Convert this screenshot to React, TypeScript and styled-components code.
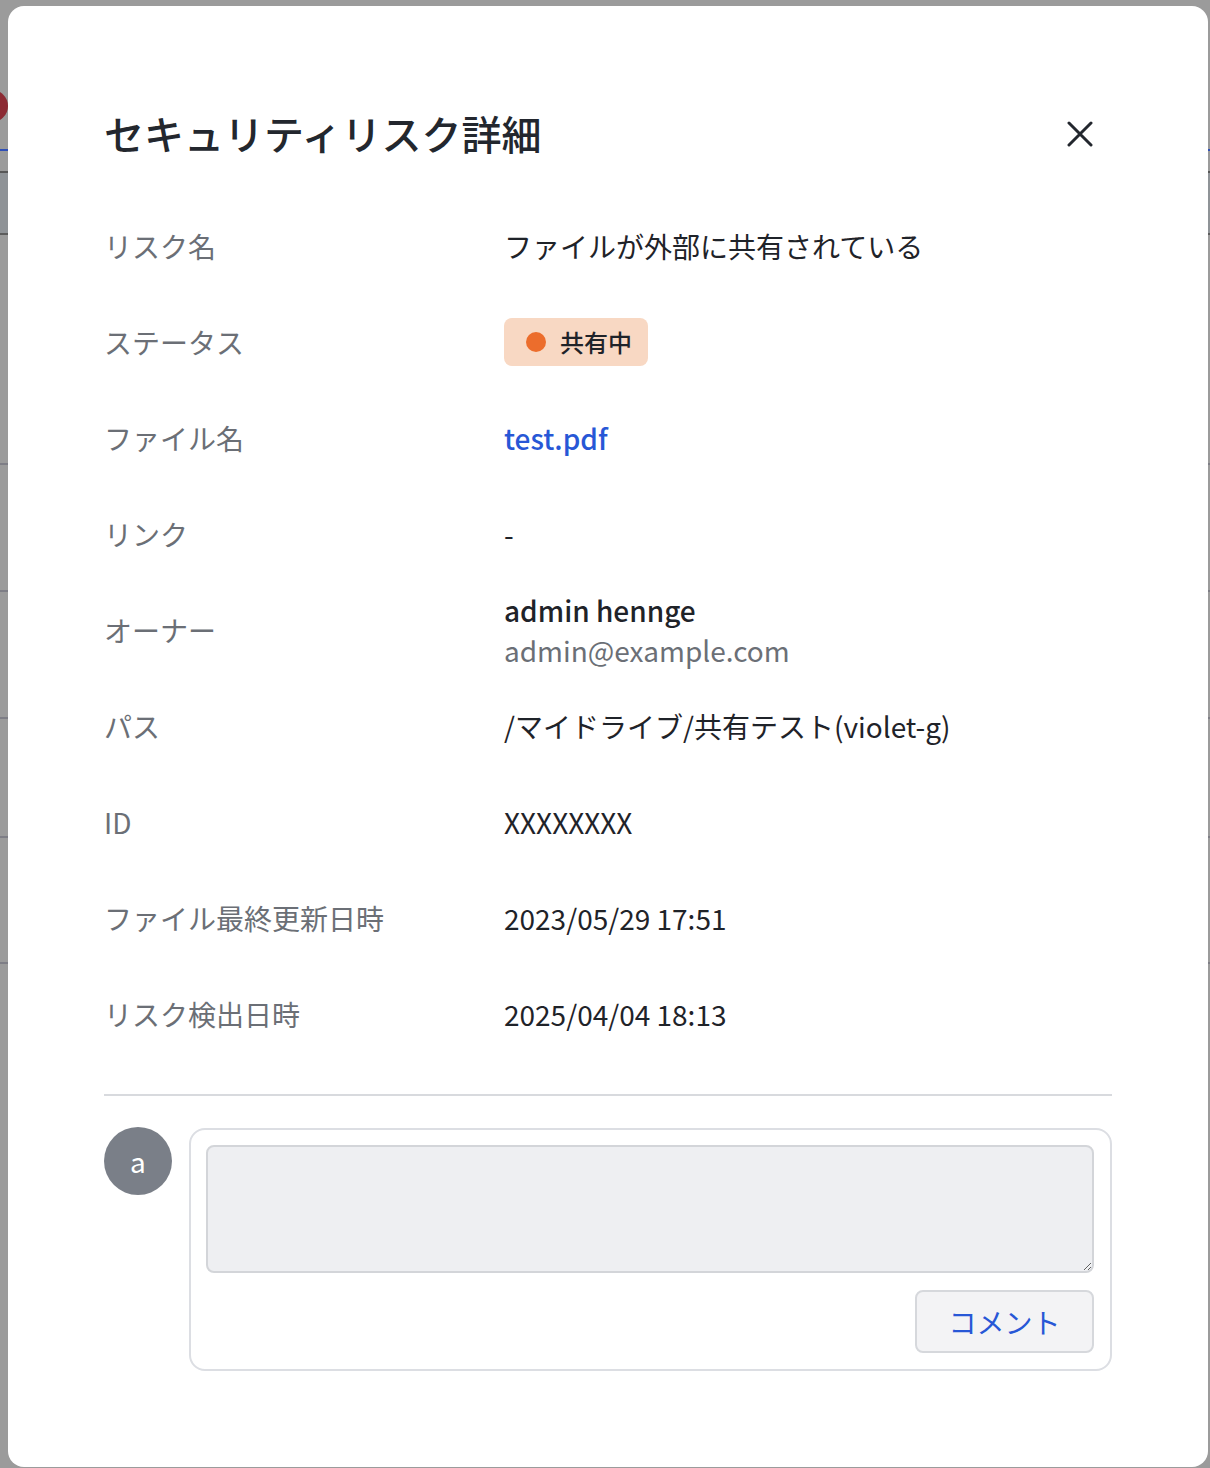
import React from "react";
import styled, { createGlobalStyle } from "styled-components";

const GlobalStyle = createGlobalStyle`
  html, body {
    margin: 0;
    padding: 0;
    background: #9b9b9b;
    font-family: "Noto Sans CJK JP", "Noto Sans", sans-serif;
    color: #1f2329;
  }
  * { box-sizing: border-box; }
`;

const Page = styled.div`
  position: relative;
  width: 1210px;
  height: 1468px;
  overflow: hidden;
  display: flex;
  flex-direction: column;
`;

const PageTop = styled.div`
  position: relative;
  height: 151px;
  flex-shrink: 0;
  border-bottom: 2px solid #2f4fb6;
`;

const NotifyDot = styled.span`
  position: absolute;
  left: -24px;
  top: 90px;
  width: 32px;
  height: 32px;
  border-radius: 50%;
  background: #8c2a33;
`;

const PageGap = styled.div`
  height: 22px;
  flex-shrink: 0;
  border-bottom: 2px solid #575757;
`;

const PageHead = styled.div`
  height: 62px;
  flex-shrink: 0;
  background: #8f9397;
  border-bottom: 2px solid #5c5c5c;
`;

const PageRow = styled.div<{ $h: number }>`
  height: ${(p) => p.$h}px;
  border-bottom: 2px solid #7e7e86;
  flex-shrink: 0;
`;

const Overlay = styled.div`
  position: absolute;
  inset: 0;
  padding: 6px 2px 0 8px;
`;

const Modal = styled.div`
  background: #ffffff;
  border-radius: 16px;
  padding: 95px 96px 96px 96px;
  display: flex;
  flex-direction: column;
`;

const Header = styled.div`
  display: flex;
  align-items: center;
  justify-content: space-between;
  height: 64px;
  margin-bottom: 33px;
`;

const Title = styled.h1`
  margin: 0;
  font-size: 40px;
  font-weight: 500;
  color: #23272e;
  line-height: 64px;
`;

const CloseButton = styled.button`
  width: 40px;
  height: 40px;
  margin: 2px 12px 0 0;
  border: none;
  background: transparent;
  padding: 0;
  display: flex;
  align-items: center;
  justify-content: center;
  cursor: pointer;
`;

const DetailList = styled.div`
  display: flex;
  flex-direction: column;
`;

const DetailRow = styled.div`
  display: grid;
  grid-template-columns: 400px 1fr;
  align-items: center;
  height: 96px;
`;

const Label = styled.div`
  font-size: 28px;
  color: #6b6f76;
  line-height: 40px;
`;

const Value = styled.div`
  font-size: 28px;
  color: #1f2329;
  line-height: 40px;
`;

const FileLink = styled.a`
  font-size: 28px;
  color: #2757d6;
  text-decoration: none;
  font-weight: 500;
`;

const StatusBadge = styled.span`
  display: inline-flex;
  align-items: center;
  gap: 14px;
  height: 48px;
  padding: 0 16px 0 22px;
  background: #f8d8c3;
  border-radius: 8px;
  font-size: 24px;
  font-weight: 500;
  color: #1f2329;
`;

const StatusDot = styled.span`
  width: 20px;
  height: 20px;
  border-radius: 50%;
  background: #ec6d2c;
`;

const OwnerName = styled.div`
  font-weight: 500;
  color: #1f2329;
`;

const OwnerEmail = styled.div`
  color: #6b6f76;
`;

const Divider = styled.hr`
  margin: 32px 0 32px;
  border: none;
  border-top: 2px solid #d8dade;
  height: 0;
`;

const CommentArea = styled.div`
  display: flex;
  gap: 17px;
  align-items: flex-start;
`;

const Avatar = styled.div`
  flex: 0 0 68px;
  width: 68px;
  height: 68px;
  margin-top: -1px;
  border-radius: 50%;
  background: #7a7f88;
  color: #ffffff;
  font-size: 28px;
  display: flex;
  align-items: center;
  justify-content: center;
`;

const CommentBox = styled.div`
  flex: 1;
  border: 2px solid #dcdee3;
  border-radius: 16px;
  padding: 15px 16px 16px 15px;
  display: flex;
  flex-direction: column;
  align-items: flex-end;
  gap: 17px;
`;

const TextArea = styled.textarea`
  width: 100%;
  height: 128px;
  background: #eeeff2;
  border: 2px solid #d3d5d9;
  border-radius: 8px;
  font-family: inherit;
  font-size: 24px;
  padding: 10px;
  resize: vertical;
  outline: none;
`;

const SubmitButton = styled.button`
  width: 179px;
  height: 63px;
  background: #f3f3f5;
  border: 2px solid #d6d8dc;
  border-radius: 8px;
  color: #2757d6;
  font-family: inherit;
  font-size: 28px;
  cursor: pointer;
`;

const rows: { label: string; value: React.ReactNode }[] = [
  { label: "リスク名", value: "ファイルが外部に共有されている" },
  {
    label: "ステータス",
    value: (
      <StatusBadge>
        <StatusDot />
        共有中
      </StatusBadge>
    ),
  },
  { label: "ファイル名", value: <FileLink href="#">test.pdf</FileLink> },
  { label: "リンク", value: "-" },
  {
    label: "オーナー",
    value: (
      <>
        <OwnerName>admin hennge</OwnerName>
        <OwnerEmail>admin@example.com</OwnerEmail>
      </>
    ),
  },
  { label: "パス", value: "/マイドライブ/共有テスト(violet-g)" },
  { label: "ID", value: "XXXXXXXX" },
  { label: "ファイル最終更新日時", value: "2023/05/29 17:51" },
  { label: "リスク検出日時", value: "2025/04/04 18:13" },
];

export default function App() {
  return (
    <>
      <GlobalStyle />
      <Page>
        <PageTop>
          <NotifyDot />
        </PageTop>
        <PageGap />
        <PageHead />
        <PageRow $h={230} />
        <PageRow $h={127} />
        <PageRow $h={127} />
        <PageRow $h={119} />
        <PageRow $h={126} />
        <Overlay>
          <Modal>
            <Header>
              <Title>セキュリティリスク詳細</Title>
              <CloseButton aria-label="close">
                <svg width="26" height="26" viewBox="0 0 26 26">
                  <path
                    d="M2 2 L24 24 M24 2 L2 24"
                    stroke="#23272e"
                    strokeWidth="3"
                    strokeLinecap="round"
                  />
                </svg>
              </CloseButton>
            </Header>
            <DetailList>
              {rows.map((r) => (
                <DetailRow key={r.label}>
                  <Label>{r.label}</Label>
                  <Value>{r.value}</Value>
                </DetailRow>
              ))}
            </DetailList>
            <Divider />
            <CommentArea>
              <Avatar>a</Avatar>
              <CommentBox>
                <TextArea />
                <SubmitButton>コメント</SubmitButton>
              </CommentBox>
            </CommentArea>
          </Modal>
        </Overlay>
      </Page>
    </>
  );
}
